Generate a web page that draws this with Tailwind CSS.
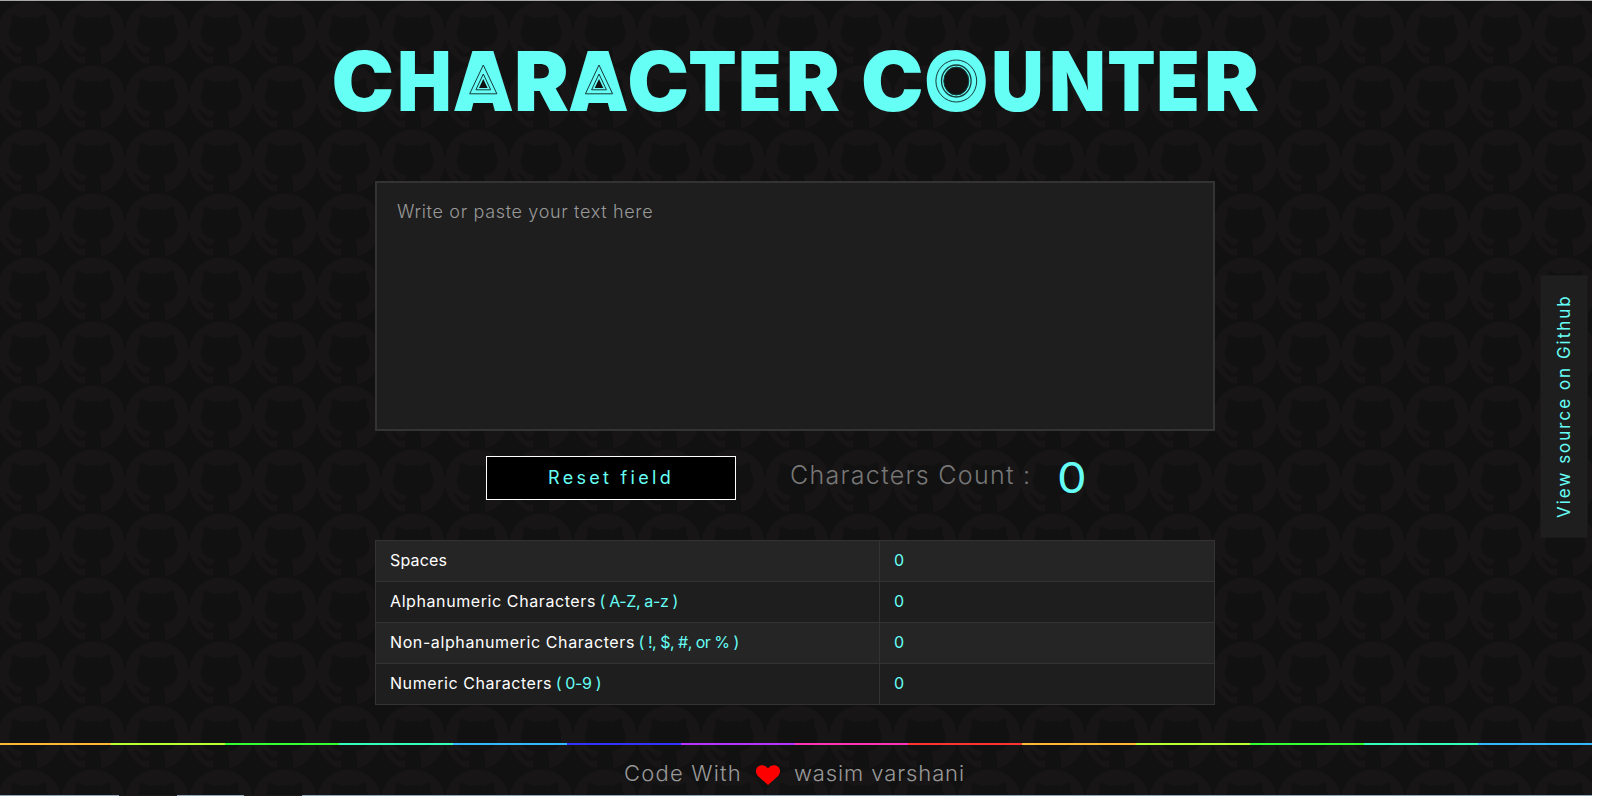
<!DOCTYPE html>
<html lang="en">
<head>
<meta charset="utf-8">
<title>Character Counter</title>
<script src="https://cdn.jsdelivr.net/npm/@tailwindcss/browser@4"></script>
</head>
<body class="h-screen overflow-hidden bg-white font-['Inter','Liberation_Sans',sans-serif]">
<div class="relative isolate h-[796px] w-[1592px] overflow-hidden border-t border-[#a8a8a8] bg-[#111111]">

  <!-- tiled background -->
  <svg class="absolute inset-0 -z-10 h-full w-full" aria-hidden="true">
    <defs>
      <pattern id="cat" x="-3" y="0.5" width="64" height="64" patternUnits="userSpaceOnUse">
        <path transform="scale(4)" fill="#181516" d="M8 0C3.58 0 0 3.58 0 8c0 3.54 2.29 6.53 5.47 7.59.4.07.55-.17.55-.38 0-.19-.01-.82-.01-1.49-2.01.37-2.53-.49-2.69-.94-.09-.23-.48-.94-.82-1.13-.28-.15-.68-.52-.01-.53.63-.01 1.08.58 1.23.82.72 1.21 1.87.87 2.33.66.07-.52.28-.87.51-1.07-1.78-.2-3.64-.89-3.64-3.95 0-.87.31-1.59.82-2.15-.08-.2-.36-1.02.08-2.12 0 0 .67-.21 2.2.82.64-.18 1.32-.27 2-.27s1.36.09 2 .27c1.53-1.04 2.2-.82 2.2-.82.44 1.1.16 1.92.08 2.12.51.56.82 1.27.82 2.15 0 3.07-1.87 3.75-3.65 3.95.29.25.54.73.54 1.48 0 1.07-.01 1.93-.01 2.2 0 .21.15.46.55.38A8.01 8.01 0 0 0 16 8c0-4.42-3.58-8-8-8z"/>
      </pattern>
    </defs>
    <rect width="100%" height="100%" fill="url(#cat)"/>
  </svg>

  <h1 class="h-[180px]">
    <svg class="block h-[180px] w-full" viewBox="0 1 1592 180">
      <text y="110.5" fill="#66fff5" font-family="Inter, sans-serif" font-weight="900" font-size="82"><tspan x="331.4" textLength="62.6" lengthAdjust="spacingAndGlyphs">C</tspan><tspan x="397.3" textLength="54.3" lengthAdjust="spacingAndGlyphs">H</tspan><tspan x="452.6" textLength="61.4" lengthAdjust="spacingAndGlyphs">A</tspan><tspan x="514" textLength="55" lengthAdjust="spacingAndGlyphs">R</tspan><tspan x="568.1" textLength="60.8" lengthAdjust="spacingAndGlyphs">A</tspan><tspan x="627.3" textLength="61.8" lengthAdjust="spacingAndGlyphs">C</tspan><tspan x="688.3" textLength="48.4" lengthAdjust="spacingAndGlyphs">T</tspan><tspan x="738.3" textLength="43.1" lengthAdjust="spacingAndGlyphs">E</tspan><tspan x="786" textLength="54" lengthAdjust="spacingAndGlyphs">R</tspan> <tspan x="861" textLength="62.6" lengthAdjust="spacingAndGlyphs">C</tspan><tspan x="924" textLength="64.6" lengthAdjust="spacingAndGlyphs">O</tspan><tspan x="991.3" textLength="52.3" lengthAdjust="spacingAndGlyphs">U</tspan><tspan x="1049.3" textLength="56.4" lengthAdjust="spacingAndGlyphs">N</tspan><tspan x="1107.3" textLength="48.4" lengthAdjust="spacingAndGlyphs">T</tspan><tspan x="1156.5" textLength="43.1" lengthAdjust="spacingAndGlyphs">E</tspan><tspan x="1204" textLength="55" lengthAdjust="spacingAndGlyphs">R</tspan></text>
      <!-- nested triangles inside each A, rings inside the O -->
      <defs>
        <g id="tri">
          <path fill="#66fff5" d="M-5 58H5L18 103H-18z"/>
          <g fill="none" stroke="#153b3a" stroke-width="1">
            <path d="M0 65L-13.6 93.8H13.6z"/>
            <path d="M0 74L-7.4 89.8H7.4z"/>
          </g>
          <path fill="#111" d="M0 79L-4.3 88H4.3z"/>
        </g>
      </defs>
      <use href="#tri" x="483.3"/>
      <use href="#tri" x="599"/>
      <g stroke="#153b3a" stroke-width="1">
        <ellipse cx="956.3" cy="81" rx="20.4" ry="21" fill="#66fff5"/>
        <ellipse cx="956.3" cy="81" rx="14.8" ry="16" fill="none" stroke-width="1.3"/>
        <ellipse cx="956.3" cy="81" rx="12.5" ry="14" fill="#131212"/>
      </g>
    </svg>
  </h1>

  <main class="ml-[375px] w-[840px]">
    <textarea class="block h-[250px] w-full resize-none border-2 border-[#333333] bg-[#1e1e1e] px-5 pt-[18px] text-[18px] leading-[22px] font-light tracking-[0.66px] text-white outline-none placeholder:text-[#999999]" placeholder="Write or paste your text here"></textarea>

    <div class="mt-[25px] flex h-11 pl-[111px]">
      <button class="h-11 w-[250px] border border-white bg-black pb-px text-[18px] leading-6 tracking-[3.3px] text-[#66fff5]">Reset field</button>
      <p class="ml-[54px] w-[268px] pt-px text-[25px] leading-9 font-light tracking-[1.3px] whitespace-nowrap text-[#777777]">Characters Count :</p>
      <p class="-ml-px h-11 w-[26px] origin-left scale-x-112 pt-px text-[42px] leading-[42px] font-normal text-[#66fff5]">0</p>
    </div>

    <dl class="mt-10 grid grid-cols-[505px_335px] text-[16px] leading-6 text-white">
      <dt class="h-[41px] border-t border-l border-[#333] bg-[#252525] pt-[7px] pl-[14px] tracking-[0.17px]">Spaces</dt>
      <dd class="h-[41px] border-x border-t -ml-px border-[#333] bg-[#252525] pt-[7px] pl-[14px] text-[#66fff5]">0</dd>
      <dt class="h-[41px] border-t border-l border-[#333] bg-[#1e1e1e] pt-[7px] pl-[14px] tracking-[0.59px]">Alphanumeric Characters <span class="-ml-[1.5px] tracking-[-0.37px] text-[#66fff5]">( A-Z, a-z )</span></dt>
      <dd class="h-[41px] border-x border-t -ml-px border-[#333] bg-[#1e1e1e] pt-[7px] pl-[14px] text-[#66fff5]">0</dd>
      <dt class="h-[41px] border-t border-l border-[#333] bg-[#252525] pt-[7px] pl-[14px] tracking-[0.6px]">Non-alphanumeric Characters <span class="-ml-[1.5px] tracking-[-0.5px] text-[#66fff5]">( !, $, #, or % )</span></dt>
      <dd class="h-[41px] border-x border-t -ml-px border-[#333] bg-[#252525] pt-[7px] pl-[14px] text-[#66fff5]">0</dd>
      <dt class="h-[42px] border-y border-l border-[#333] bg-[#1e1e1e] pt-[7px] pl-[14px] tracking-[0.57px]">Numeric Characters <span class="-ml-[1.5px] tracking-[-0.37px] text-[#66fff5]">( 0-9 )</span></dt>
      <dd class="h-[42px] border -ml-px border-[#333] bg-[#1e1e1e] pt-[7px] pl-[14px] text-[#66fff5]">0</dd>
    </dl>
  </main>

  <footer class="mt-[38px]">
    <div class="-ml-[3px] grid h-0.5 w-[1595px] grid-cols-14">
      <i class="bg-[#ffb833]"></i><i class="bg-[#b8ff33]"></i><i class="bg-[#33ff33]"></i><i class="bg-[#33ffb8]"></i><i class="bg-[#33b8ff]"></i><i class="bg-[#3333ff]"></i><i class="bg-[#b833ff]"></i><i class="bg-[#ff33b8]"></i><i class="bg-[#ff3333]"></i><i class="bg-[#ffb833]"></i><i class="bg-[#b8ff33]"></i><i class="bg-[#33ff33]"></i><i class="bg-[#33ffb8]"></i><i class="bg-[#33b8ff]"></i>
    </div>
    <div class="flex pt-[14px] pl-[624px] text-[22px] leading-7 font-light whitespace-nowrap text-[#999999]">
      <span class="w-[132px] tracking-[1.2px]">Code With</span>
      <svg class="mt-[6px] h-5 w-6" viewBox="0 0 24 20"><path fill="#ff0000" d="M12 20L2.2 11.2C-.8 8.3-.6 4 1.800 1.800C4.500-.7 9.500-.6 12 3.600C14.500-.6 19.500-.7 22.200 1.800C24.600 4 24.800 8.300 21.800 11.200z"/></svg>
      <span class="ml-[14px] tracking-[0.9px]">wasim varshani</span>
    </div>
  </footer>

  <a class="absolute top-[274px] left-[1540px] flex h-[263px] w-12 rotate-180 items-center justify-center border border-[#1a1a1a] bg-[#1e1e1e] text-[17px] leading-6 tracking-[2px] whitespace-nowrap text-[#66fff5] [writing-mode:vertical-rl]">View source on Github</a>

  <!-- sliver of the window edge below the page -->
  <div class="absolute bottom-0 left-0 flex h-px w-full bg-[#1a1a1c]">
    <i class="w-[119px] bg-[#8fa5b5]"></i><i class="ml-[58px] w-[67px] bg-[#8fa5b5]"></i><i class="ml-[58px] flex-1 bg-[#8fa5b5]"></i>
  </div>
</div>
</body>
</html>
